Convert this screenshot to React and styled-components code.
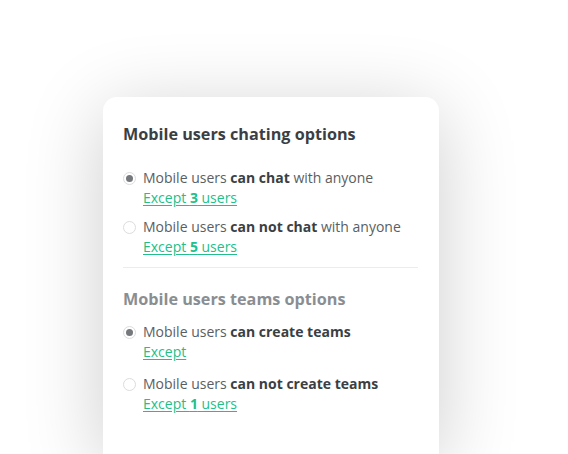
import React from "react";
import styled, { createGlobalStyle } from "styled-components";

const Global = createGlobalStyle`
  html, body { margin: 0; padding: 0; background: #ffffff; }
  body { font-family: "Open Sans", "Noto Sans", sans-serif; width: 568px; height: 454px; overflow: hidden; }
`;

const Page = styled.div`
  padding: 97px 0 0 103px;
`;

const Card = styled.div`
  width: 336px;
  height: 357px;
  box-sizing: border-box;
  background: #fff;
  border-radius: 14px 14px 0 0;
  box-shadow: 0 14px 80px rgba(0, 0, 0, 0.2);
  padding: 26px 21px 0 20px;
`;

const Title = styled.h2`
  margin: 0;
  font-size: 16.2px;
  line-height: 22px;
  font-weight: 700;
  color: ${(p) => (p.$muted ? "#8a8e92" : "#3b3f43")};
`;

const Options = styled.div`
  display: flex;
  flex-direction: column;
  gap: ${(p) => p.$gap}px;
  margin-top: ${(p) => p.$top}px;
`;

const Option = styled.div`
  display: flex;
  align-items: flex-start;
  gap: 7px;
`;

const Radio = styled.span`
  flex: none;
  width: 13px;
  height: 13px;
  margin-top: 4px;
  box-sizing: border-box;
  border-radius: 50%;
  border: 1px solid #dcdcdc;
  background: #fff;
  display: flex;
  align-items: center;
  justify-content: center;
  &::after {
    content: "";
    width: 7px;
    height: 7px;
    border-radius: 50%;
    background: ${(p) => (p.$checked ? "#75797d" : "transparent")};
  }
`;

const Body = styled.div`
  display: flex;
  flex-direction: column;
`;

const Label = styled.div`
  font-size: 14px;
  line-height: 20px;
  color: #5a5e62;
  b { font-weight: 700; color: #3b3f43; }
`;

const Link = styled.a`
  font-size: 14px;
  line-height: 20px;
  color: #22bf8a;
  text-decoration: underline;
  text-underline-offset: 2px;
  cursor: pointer;
  b { font-weight: 700; }
`;

const Divider = styled.hr`
  border: none;
  height: 1px;
  background: #ececec;
  margin: 10px 0 20px;
`;

const Item = ({ checked, pre, bold, post, children }) => (
  <Option>
    <Radio $checked={checked} />
    <Body>
      <Label>
        {pre} <b>{bold}</b>
        {post ? ` ${post}` : ""}
      </Label>
      <Link>{children}</Link>
    </Body>
  </Option>
);

export default function App() {
  return (
    <>
      <Global />
      <Page>
        <Card>
          <Title>Mobile users chating options</Title>
          <Options $gap={9} $top={23}>
            <Item checked pre="Mobile users" bold="can chat" post="with anyone">
              Except <b>3</b> users
            </Item>
            <Item pre="Mobile users" bold="can not chat" post="with anyone">
              Except <b>5</b> users
            </Item>
          </Options>
          <Divider />
          <Title $muted>Mobile users teams options</Title>
          <Options $gap={12} $top={12}>
            <Item checked pre="Mobile users" bold="can create teams">
              Except
            </Item>
            <Item pre="Mobile users" bold="can not create teams">
              Except <b>1</b> users
            </Item>
          </Options>
        </Card>
      </Page>
    </>
  );
}
